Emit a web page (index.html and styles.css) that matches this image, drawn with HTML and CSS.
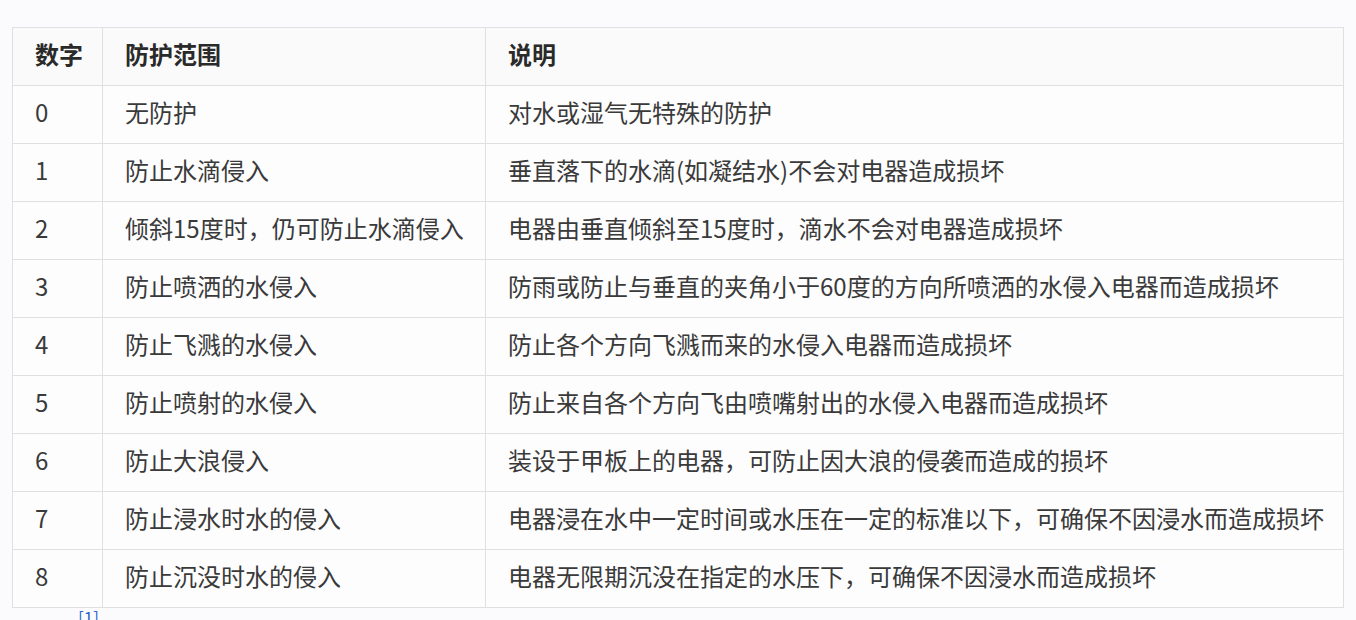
FILE: index.html
```html
<!DOCTYPE html>
<html lang="zh-CN">
<head>
<meta charset="utf-8">
<title>IP防水等级</title>
<link rel="stylesheet" href="styles.css">
</head>
<body>
<div class="page">
  <table class="ip-table">
    <colgroup>
      <col class="c-num">
      <col class="c-range">
      <col class="c-desc">
    </colgroup>
    <thead>
      <tr><th>数字</th><th>防护范围</th><th>说明</th></tr>
    </thead>
    <tbody>
      <tr><td>0</td><td>无防护</td><td>对水或湿气无特殊的防护</td></tr>
      <tr><td>1</td><td>防止水滴侵入</td><td>垂直落下的水滴(如凝结水)不会对电器造成损坏</td></tr>
      <tr><td>2</td><td>倾斜15度时，仍可防止水滴侵入</td><td>电器由垂直倾斜至15度时，滴水不会对电器造成损坏</td></tr>
      <tr><td>3</td><td>防止喷洒的水侵入</td><td>防雨或防止与垂直的夹角小于60度的方向所喷洒的水侵入电器而造成损坏</td></tr>
      <tr><td>4</td><td>防止飞溅的水侵入</td><td>防止各个方向飞溅而来的水侵入电器而造成损坏</td></tr>
      <tr><td>5</td><td>防止喷射的水侵入</td><td>防止来自各个方向飞由喷嘴射出的水侵入电器而造成损坏</td></tr>
      <tr><td>6</td><td>防止大浪侵入</td><td>装设于甲板上的电器，可防止因大浪的侵袭而造成的损坏</td></tr>
      <tr><td>7</td><td>防止浸水时水的侵入</td><td>电器浸在水中一定时间或水压在一定的标准以下，可确保不因浸水而造成损坏</td></tr>
      <tr><td>8</td><td>防止沉没时水的侵入</td><td>电器无限期沉没在指定的水压下，可确保不因浸水而造成损坏</td></tr>
    </tbody>
  </table>
  <div class="ref"><a class="ref-link">[1]</a></div>
</div>
</body>
</html>
```

FILE: styles.css
```css
html, body {
  margin: 0;
  padding: 0;
  background: #fbfbfd;
}
body {
  font-family: "Noto Sans CJK SC", "Noto Sans", "Liberation Sans", sans-serif;
  color: #333333;
  overflow: hidden;
}
.page {
  padding: 27px 0 0 12px;
}
.ip-table {
  border-collapse: collapse;
  width: 1331px;
  table-layout: fixed;
  font-size: 24px;
  background: #fdfdfe;
}
.c-num { width: 90px; }
.c-range { width: 383px; }
.c-desc { width: 858px; }
.ip-table th,
.ip-table td {
  border: 1.5px solid #dfe0e4;
  height: 58px;
  padding: 0 0 5px 22px;
  text-align: left;
  vertical-align: middle;
  white-space: nowrap;
  line-height: 1;
  box-sizing: border-box;
}
.ip-table th {
  font-weight: 700;
  color: #2a2a2a;
  background: #fafafb;
}
.ip-table td {
  font-weight: 400;
  color: #3a3a3a;
}
.ref {
  padding: 1px 0 0 66px;
  font-size: 17px;
  line-height: 1;
}
.ref-link {
  color: #3366cc;
}
```
